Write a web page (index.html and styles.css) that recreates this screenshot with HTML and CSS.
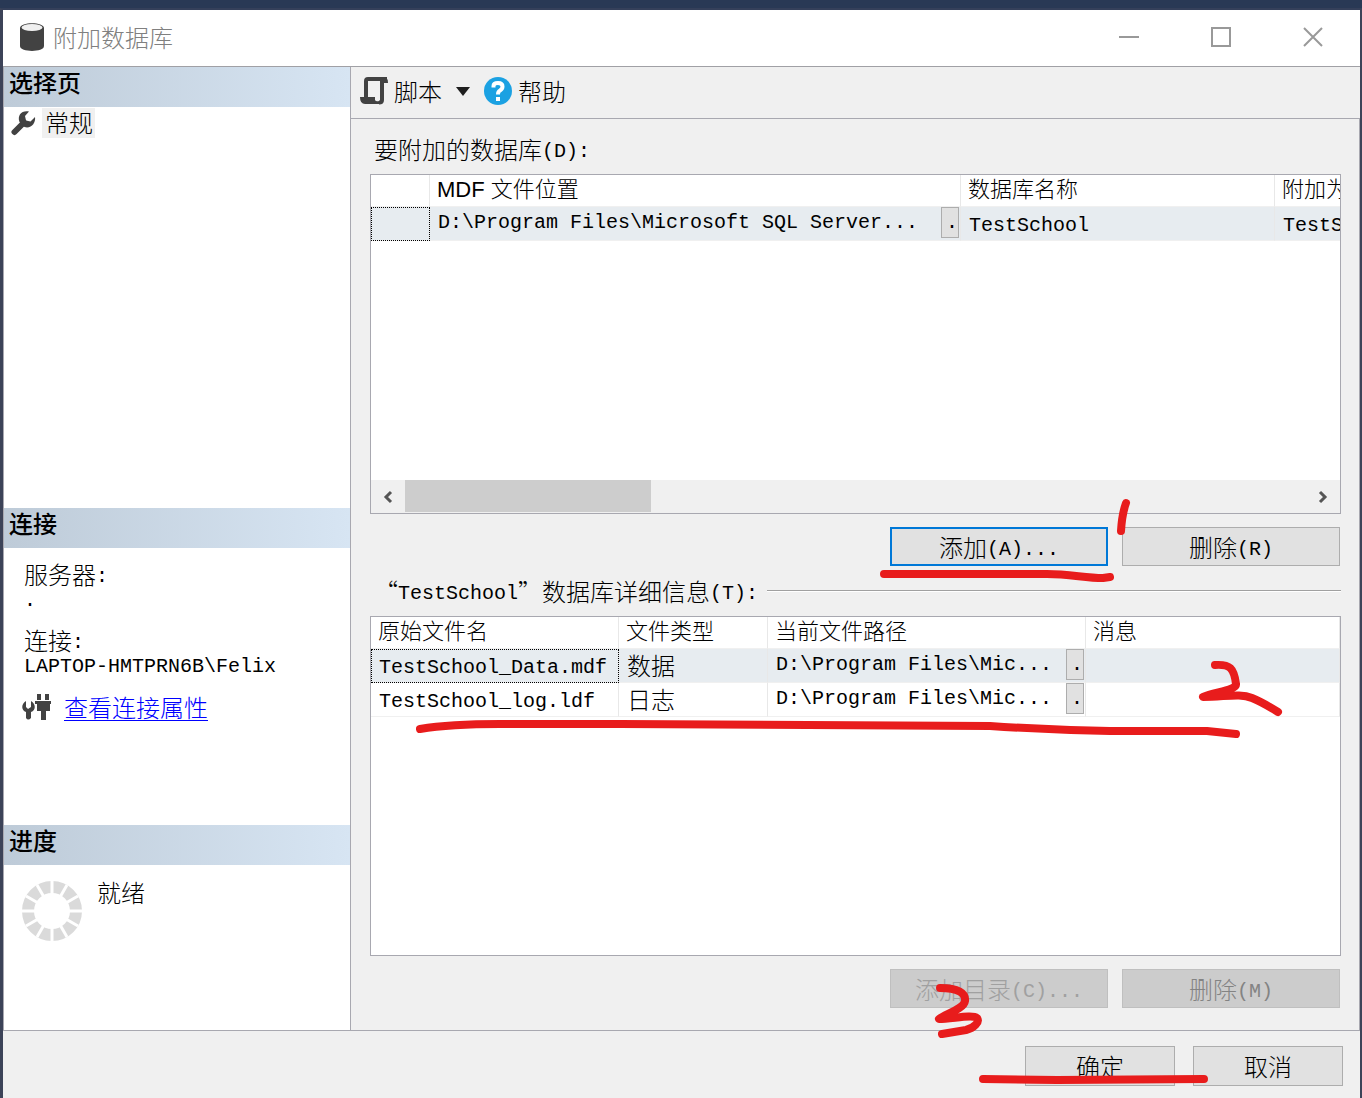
FILE: index.html
```html
<!DOCTYPE html>
<html lang="zh-CN">
<head>
	<title>附加数据库</title>
	<meta charset="utf-8">
	<link rel="stylesheet" href="styles.css">
</head>
<body>
<div class="window">
	<header class="titlebar">
		<svg class="icon-db" width="26" height="30" viewBox="0 0 26 30">
			<path d="M1 6C1 -0.5 25 -0.5 25 6V24C25 30.500 1 30.500 1 24Z" fill="#424242"/>
			<ellipse cx="13" cy="5.500" rx="10.500" ry="3.500" fill="#f0f0f0"/>
		</svg>
		<h1>附加数据库</h1>
		<button class="win-btn" aria-label="最小化"><svg width="20" height="20"><path d="M0 10H20"/></svg></button>
		<button class="win-btn" aria-label="最大化"><svg width="20" height="20"><path d="M1 1H19V19H1Z"/></svg></button>
		<button class="win-btn" aria-label="关闭"><svg width="20" height="20"><path d="M1 1L19 19M19 1L1 19"/></svg></button>
	</header>

	<div class="main">
		<aside class="sidebar">
			<section>
				<h2>选择页</h2>
				<div class="page-item">
					<svg width="26" height="26" viewBox="0 0 26 26">
						<path d="M4.500 22L14 12.500" stroke="#424242" stroke-width="6" stroke-linecap="round"/>
						<path d="M19 1.500C12 0 7 5 9.500 12L14.500 17C21 19 26 13 25 7L20.500 11.500L16 10.500L15 6Z" fill="#424242"/>
					</svg>
					<span>常规</span>
				</div>
			</section>
			<section>
				<h2>连接</h2>
				<div class="conn">
					<p>服务器<span class="latin">:</span></p>
					<p><span class="latin">.</span></p>
					<p class="conn-user">连接<span class="latin">:</span></p>
					<p><span class="latin">LAPTOP-HMTPRN6B\Felix</span></p>
					<div class="conn-link">
						<svg width="30" height="28" viewBox="0 0 30 28" fill="#424242">
							<path d="M4 8C-1 11 -1 17 4 19V25Q6 28 9 25V19C14 17 14 11 9 8V14L6 16L4 14Z"/>
							<path d="M15 1h4v6h-4zM23 1h4v6h-4zM13 8h16v3h-1v7h-4v9h-5v-9h-4v-7h-2z"/>
						</svg>
						<a href="#">查看连接属性</a>
					</div>
				</div>
			</section>
			<section>
				<h2>进度</h2>
				<div class="progress">
					<svg width="60" height="60" viewBox="0 0 60 60">
						<circle cx="30" cy="30" r="24" fill="none" stroke="#dadada" stroke-width="12"/>
						<path d="M30 0V60M0 30H60M15 4L45 56M45 4L15 56M4 15L56 45M4 45L56 15" stroke="#fff" stroke-width="3"/>
					</svg>
					<span>就绪</span>
				</div>
			</section>
		</aside>

		<div class="content">
			<div class="toolbar">
				<button class="tool">
					<svg width="28" height="28" viewBox="0 0 28 28" fill="none" stroke="#424242" stroke-width="4">
						<path d="M6 20V4Q6 2 8 2H27M22 3V23Q22 25.500 19 25.500"/>
						<path d="M26 0.500Q28 2 28 6H22V2Z" fill="#424242" stroke="none"/>
						<path d="M0 20H15V23Q16 25 19 24V27H5Q0 27 0 20Z" fill="#424242" stroke="none"/>
					</svg>
					<span>脚本</span>
					<svg class="caret" width="14" height="9"><path d="M0 0H14L7 9Z" fill="#1e1e1e"/></svg>
				</button>
				<button class="tool">
					<svg width="28" height="28" viewBox="0 0 28 28">
						<circle cx="14" cy="14" r="14" fill="#1ba1e2"/>
						<path d="M9.500 10.500V9Q9.500 6 14 6Q18.500 6 18.500 9.500Q18.500 12 16 13.500Q14 14.500 14 17.500" fill="none" stroke="#fff" stroke-width="4"/>
						<path d="M12 20h4v4h-4z" fill="#fff"/>
					</svg>
					<span>帮助</span>
				</button>
			</div>

			<div class="panel">
				<p class="label">要附加的数据库<span class="latin">(D):</span></p>
				<div class="grid-box">
					<table class="grid databases">
						<colgroup><col class="c-mark"><col class="c-mdf"><col class="c-name"><col class="c-as"></colgroup>
						<thead>
							<tr><th></th><th>MDF 文件位置</th><th>数据库名称</th><th>附加为</th></tr>
						</thead>
						<tbody>
							<tr class="selected">
								<td class="focus"></td>
								<td><div class="path"><span class="latin">D:\Program Files\Microsoft SQL Server...</span><button class="browse latin">.</button></div></td>
								<td><span class="latin">TestSchool</span></td>
								<td><span class="latin">TestSchool</span></td>
							</tr>
						</tbody>
					</table>
					<div class="scrollbar">
						<button aria-label="向左"><svg width="12" height="14"><path d="M9 2L4 7L9 12"/></svg></button>
						<div class="track"><div class="thumb"></div></div>
						<button aria-label="向右"><svg width="12" height="14"><path d="M3 2L8 7L3 12"/></svg></button>
					</div>
				</div>
				<div class="buttons">
					<button class="btn default">添加<span class="latin">(A)...</span></button>
					<button class="btn">删除<span class="latin">(R)</span></button>
				</div>

				<div class="group">
					<p>“<span class="latin">TestSchool</span>”数据库详细信息<span class="latin">(T):</span></p>
				</div>
				<div class="grid-box">
					<table class="grid details">
						<colgroup><col class="c-file"><col class="c-type"><col class="c-path"><col></colgroup>
						<thead>
							<tr><th>原始文件名</th><th>文件类型</th><th>当前文件路径</th><th>消息</th></tr>
						</thead>
						<tbody>
							<tr class="selected">
								<td class="focus"><span class="latin">TestSchool_Data.mdf</span></td>
								<td>数据</td>
								<td><div class="path"><span class="latin">D:\Program Files\Mic...</span><button class="browse latin">.</button></div></td>
								<td></td>
							</tr>
							<tr>
								<td><span class="latin">TestSchool_log.ldf</span></td>
								<td>日志</td>
								<td><div class="path"><span class="latin">D:\Program Files\Mic...</span><button class="browse latin">.</button></div></td>
								<td></td>
							</tr>
						</tbody>
					</table>
				</div>
				<div class="buttons">
					<button class="btn" disabled>添加目录<span class="latin">(C)...</span></button>
					<button class="btn dark" disabled>删除<span class="latin">(M)</span></button>
				</div>
			</div>
		</div>
	</div>

	<footer class="footer">
		<button class="btn">确定</button>
		<button class="btn">取消</button>
	</footer>
</div>

<!-- red pen marks -->
<svg class="marks" width="1362" height="1098" viewBox="0 0 1362 1098">
	<path d="M1126 503Q1122 514 1121 531"/>
	<path d="M884 574H1047C1070 574 1085 578 1103 578L1110 577"/>
	<path d="M420 729Q450 724 500 724L620 724L990 726Q1050 730 1110 731H1207L1236 734"/>
	<path d="M1215 665C1230 664 1234 668 1236 684C1237 690 1215 692 1203 697C1225 697 1240 693 1252 698Q1262 702 1278 712"/>
	<path d="M940 988C958 988 966 993 965 1001C964 1009 945 1014 939 1019C952 1019 972 1014 977 1018C980 1022 974 1028 966 1030L942 1034"/>
	<path d="M983 1079L1057 1080L1204 1079"/>
</svg>
</body>
</html>
```
FILE: styles.css
```css
* {
	box-sizing: border-box;
}
body {
	margin: 0;
	background-color: #293955;
	font-family: "Noto Sans CJK SC", sans-serif;
	font-size: 24px;
	font-weight: 300;
	line-height: 24px;
	color: #000;
}
h1, h2, p {
	margin: 0;
}
button {
	font: inherit;
	color: inherit;
	padding: 0;
	border: none;
	background: none;
}
svg {
	display: block;
	flex: none;
}
.latin {
	font-family: "Liberation Mono", monospace;
	font-size: 20px;
	font-weight: 400;
	line-height: 16px;
	vertical-align: 2px;
}

.window {
	display: flex;
	flex-direction: column;
	height: calc(100vh - 8px);
	margin-top: 8px;
	border: solid #3c4358;
	border-width: 2px 2px 0 3px;
	border-top-color: #35405a;
	background-color: #f0f0f0;
}
.titlebar {
	display: flex;
	align-items: center;
	height: 57px;
	padding: 0 1px 2px 16px;
	background-color: #fff;
	border-bottom: 1px solid #a0a0a5;
}
.titlebar h1 {
	flex: 1;
	margin-left: 8px;
	font-size: 24px;
	font-weight: 300;
	color: #808080;
}
.win-btn {
	display: flex;
	align-items: center;
	justify-content: center;
	width: 92px;
	height: 54px;
}
.win-btn svg {
	fill: none;
	stroke: #999;
	stroke-width: 2;
}

.main {
	display: flex;
	flex: 1;
	min-height: 0;
	border-bottom: 1px solid #a8a8b0;
}
.sidebar {
	display: grid;
	grid-template-rows: 1fr 317px 205px;
	width: 348px;
	background-color: #fff;
	border: solid #a8a8b0;
	border-width: 0 1px;
}
.sidebar h2 {
	height: 40px;
	padding: 3px 5px;
	font-size: 24px;
	font-weight: 500;
	line-height: 24px;
	background: linear-gradient(to right, #becbd8, #d7e5f3);
}
.page-item {
	display: flex;
	align-items: center;
	gap: 6px;
	padding: 1px 6px;
}
.page-item span {
	padding: 2px 2px 4px 3px;
	background-color: #f0f0f0;
}
.conn {
	padding: 14px 20px;
}
.conn-user {
	margin-top: 18px;
}
.conn-link {
	display: flex;
	align-items: center;
	gap: 12px;
	margin-top: 17px;
	margin-left: -2px;
}
a {
	color: #00f;
	text-underline-offset: 3px;
	text-decoration-thickness: 1px;
}
.progress {
	display: flex;
	gap: 15px;
	padding: 16px 18px;
}
.progress span {
	line-height: 22px;
}

.content {
	display: flex;
	flex-direction: column;
	flex: 1;
	min-width: 0;
}
.toolbar {
	display: flex;
	gap: 14px;
	height: 52px;
	padding: 0 9px 3px;
	border-bottom: 1px solid #a8a8b0;
}
.tool {
	display: flex;
	align-items: center;
	gap: 6px;
}
.caret {
	margin-left: 8px;
}
.panel {
	display: flex;
	flex-direction: column;
	flex: 1;
	min-height: 0;
	padding: 18px 18px 22px 19px;
	border-right: 1px solid #a8a8b0;
}
.label {
	padding-left: 4px;
	margin-bottom: 13px;
}
.group {
	display: flex;
	align-items: center;
	gap: 9px;
	padding-left: 4px;
	margin: 13px 0;
}
.group::after {
	content: "";
	flex: 1;
	border-top: 1px solid #a0a0a0;
	border-bottom: 1px solid #fff;
}
.grid-box {
	display: flex;
	flex-direction: column;
	flex: 1;
	min-height: 0;
	overflow: hidden;
	background-color: #fff;
	border: 1px solid #a8a8b0;
}
.grid {
	table-layout: fixed;
	border-collapse: separate;
	border-spacing: 0;
}
.databases {
	width: 1104px;
}
.details {
	width: 100%;
}
.c-mark {
	width: 59px;
}
.c-mdf {
	width: 531px;
}
.c-name {
	width: 314px;
}
.c-as {
	width: 200px;
}
.c-file {
	width: 248px;
}
.c-type {
	width: 149px;
}
.c-path {
	width: 318px;
}
.grid th, .grid td {
	padding: 0 1px 2px 8px;
	text-align: left;
	white-space: nowrap;
	border-right: 1px solid #e8e8e8;
	border-bottom: 1px solid #f0f0f0;
}
.grid th {
	height: 32px;
	padding-left: 7px;
	font-family: "Liberation Sans", "Noto Sans CJK SC", sans-serif;
	font-size: 22px;
	font-weight: 300;
}
.grid td {
	height: 34px;
}
.selected {
	background-color: #e7ecf0;
}
.grid .focus {
	outline: 1px dotted #000;
	outline-offset: -1px;
}
.path {
	display: flex;
	align-items: center;
	justify-content: space-between;
}
.browse {
	width: 18px;
	height: 31px;
	padding-left: 4px;
	background-color: #e1e1e1;
	border: 1px solid #adadad;
}
.scrollbar {
	display: flex;
	height: 33px;
	margin-top: auto;
	background-color: #f0f0f0;
}
.scrollbar button {
	display: flex;
	align-items: center;
	justify-content: center;
	width: 34px;
}
.scrollbar path {
	fill: none;
	stroke: #555;
	stroke-width: 3;
}
.track {
	flex: 1;
}
.thumb {
	width: 246px;
	height: 32px;
	background-color: #cdcdcd;
}

.buttons {
	display: flex;
	justify-content: flex-end;
	gap: 14px;
	margin-top: 13px;
	padding-right: 1px;
}
.btn {
	width: 218px;
	height: 39px;
	background-color: #e1e1e1;
	border: 1px solid #adadad;
}
.default {
	border: 2px solid #0078d7;
}
.btn:disabled {
	color: #a0a0a0;
	background-color: #ccc;
	border-color: #bfbfbf;
}
.dark:disabled {
	color: #838383;
}
.footer {
	display: flex;
	justify-content: flex-end;
	gap: 18px;
	padding: 15px 17px 12px;
}
.footer .btn {
	width: 150px;
	height: 40px;
}

.marks {
	position: absolute;
	top: 0;
	left: 0;
	fill: none;
	stroke: #e81c1c;
	stroke-width: 8;
	stroke-linecap: round;
	stroke-linejoin: round;
	pointer-events: none;
}
```
